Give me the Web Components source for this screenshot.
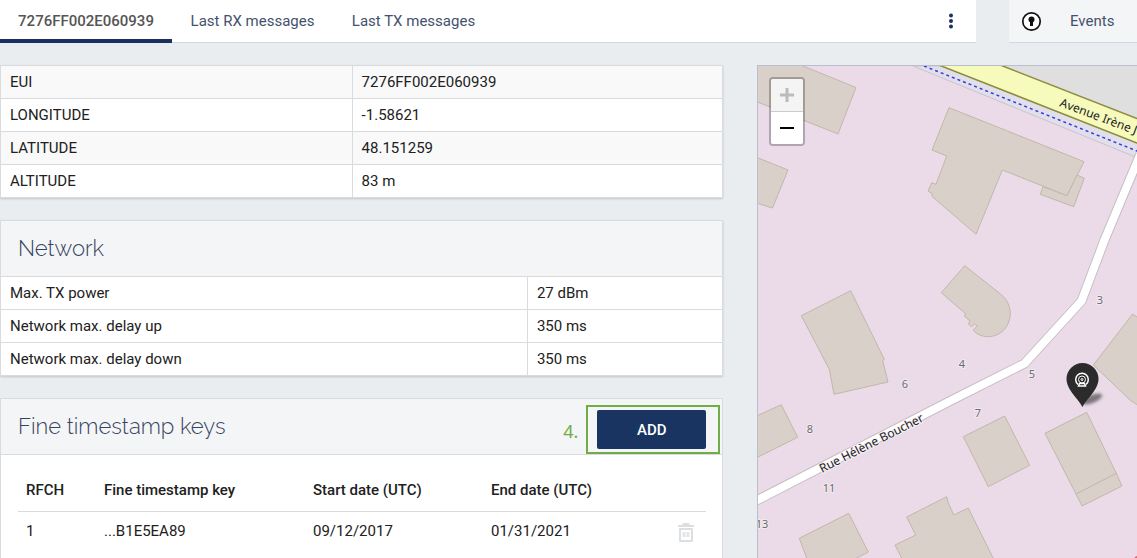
<!DOCTYPE html>
<html lang="en">
<head>
<meta charset="utf-8">
<title>Base station 7276FF002E060939</title>
<style>
  body { margin: 0; background: #e9edf0; color: #212121; font: 15px/20px Roboto, "Liberation Sans", sans-serif; }
</style>
</head>
<body>
<station-page></station-page>

<template id="tpl-page">
  <style>
    :host { display: flex; flex-direction: column; min-height: 100vh; }
    header { display: flex; gap: 33px; }
    tab-bar { flex: 1; min-width: 0; }
    main { flex: 1; display: grid; grid-template-columns: minmax(0, 40fr) minmax(0, 21fr); gap: 34px; padding-top: 22px; }
    .cards { display: flex; flex-direction: column; gap: 22px; }
    .last { flex: 1; }
  </style>
  <header>
    <tab-bar></tab-bar>
    <event-link></event-link>
  </header>
  <main>
    <div class="cards">
      <info-card striped split="35 / 72" label="Identity"></info-card>
      <info-card split="35 / 48" heading="Network" label="Network"></info-card>
      <key-card class="last"></key-card>
    </div>
    <site-map></site-map>
  </main>
</template>

<template id="tpl-tabs">
  <style>
    :host { display: flex; align-items: center; height: 42px; background: #fff; border-bottom: 1px solid #d3d8de; }
    nav { display: flex; flex: 1; align-self: stretch; }
    a { box-sizing: border-box; min-width: 161px; height: 43px; padding: 11px 16px 0; text-align: center; white-space: nowrap; color: #44526e; text-decoration: none; }
    a[aria-current] { min-width: 172px; color: #555; font-weight: 500; border-bottom: 4px solid #1a3060; }
    button { display: flex; border: 0; background: none; padding: 8px; margin-right: 9px; }
  </style>
  <nav>
    <a href="#station" aria-current="page">7276FF002E060939</a>
    <a href="#rx">Last RX messages</a>
    <a href="#tx">Last TX messages</a>
  </nav>
  <button aria-label="More actions">
    <svg width="16" height="16" fill="#1a3060"><circle cx="8" cy="2.5" r="2"/><circle cx="8" cy="8" r="2"/><circle cx="8" cy="13.5" r="2"/></svg>
  </button>
</template>

<template id="tpl-event">
  <style>
    :host { display: block; width: 128px; overflow: hidden; background: #f4f5f7; border-bottom: 1px solid #d3d8de; }
    a { display: flex; align-items: center; gap: 28px; height: 42px; padding-left: 12px; color: #44526e; text-decoration: none; }
  </style>
  <a href="#events">
    <svg width="21" height="22" viewBox="0 0 21 22"><circle cx="10.5" cy="11.5" r="8.7" fill="#fff" stroke="#111" stroke-width="1.7"/><circle cx="10.5" cy="9.6" r="3" fill="#111"/><path d="M9 10h3v6H9z" fill="#111"/></svg>
    <span>Events</span>
  </a>
</template>

<template id="tpl-info">
  <style>
    :host { display: block; background: #fff; border: 1px solid #d9dbde; box-shadow: 0 1px 2px rgba(0,0,0,.16); }
    h2 { margin: 0; padding: 0 17px; background: #f4f5f7; border-bottom: 1px solid #d9dbde; color: #36435f; font: 300 22px/55px Raleway, Lato, sans-serif; }
    table { width: 100%; border-collapse: separate; border-spacing: 0; table-layout: fixed; }
    th, td { box-sizing: border-box; height: 32px; padding: 0 9px; text-align: left; font-weight: 400; }
    td { border-left: 1px solid #d9dbde; }
    tr + tr > * { height: 33px; border-top: 1px solid #d9dbde; }
    :host([striped]) tr:nth-child(odd) { background: #f9f9f9; }
  </style>
  <h2></h2>
  <table><tbody></tbody></table>
</template>

<template id="tpl-keys">
  <style>
    :host { display: block; background: #fff; border: 1px solid #d9dbde; border-bottom: 0; }
    header { display: flex; align-items: flex-end; height: 55px; padding: 0 2px 0 17px; background: #f4f5f7; border-bottom: 1px solid #d9dbde; }
    h2 { flex: 1; margin: 0; color: #36435f; font: 300 22px/55px Raleway, Lato, sans-serif; }
    .step { margin: 0 8px 11px 0; color: #70ad47; font: 18px/24px "Noto Sans", sans-serif; }
    .mark { display: flex; padding: 3px 12px 3px 9px; border: 2px solid #70ad47; }
    .add { width: 109px; height: 39px; border: 0; border-radius: 2px; background: #1a3461; color: #fff; font: 500 15px/20px Roboto, sans-serif; }
    .body { padding: 15px 16px 0 17px; }
    table { width: 100%; border-collapse: collapse; table-layout: fixed; }
    th, td { box-sizing: border-box; height: 41px; padding: 0 8px; text-align: left; white-space: nowrap; }
    th { font-weight: 500; border-bottom: 1px solid #d9dbde; }
    td { height: 39px; }
    .ch { width: 78px; } .key { width: 209px; } .start { width: 178px; } .act { width: 37px; }
    .del { display: flex; margin-top: 4px; padding: 0; border: 0; background: none; }
  </style>
  <header>
    <h2>Fine timestamp keys</h2>
    <span class="step">4.</span>
    <div class="mark"><button class="add">ADD</button></div>
  </header>
  <div class="body">
    <table>
      <colgroup><col class="ch"><col class="key"><col class="start"><col><col class="act"></colgroup>
      <thead><tr><th>RFCH</th><th>Fine timestamp key</th><th>Start date (UTC)</th><th>End date (UTC)</th><th></th></tr></thead>
      <tbody><tr><td>1</td><td>...B1E5EA89</td><td>09/12/2017</td><td>01/31/2021</td>
        <td><button class="del" aria-label="Delete key"><svg width="18" height="20" viewBox="0 0 18 20" fill="#dcdfe2"><path d="M6 0h6l1 2h4v2H1V2h4z"/><path d="M3 6h12v12H3z" fill="none" stroke="#dcdfe2" stroke-width="2" stroke-linejoin="round"/><path d="M5.500 9h3v5h-3zM9.500 9h3v5h-3z" opacity=".8"/></svg></button></td></tr></tbody>
    </table>
  </div>
</template>

<template id="tpl-map">
  <style>
    :host { display: block; position: relative; overflow: hidden; background: #ebdbe8; border: 1px solid #b9bfcd; border-right: 0; border-bottom: 0; }
    .canvas { position: absolute; inset: 0; width: 100%; height: 100%; }
    .zoom { position: absolute; left: 11px; top: 11px; width: 32px; border: 2px solid rgba(0,0,0,.25); border-radius: 4px; background-clip: padding-box; }
    .zoom button { display: grid; place-items: center; width: 32px; height: 32px; padding: 0; border: 0; background: #fff; border-radius: 0 0 2px 2px; }
    .zoom button:first-child { height: 33px; background: #f4f4f4; border-bottom: 1px solid #ccc; border-radius: 2px 2px 0 0; }
    .b { fill: #d9d0c9; stroke: #c4b6ab; stroke-width: 1; }
    .n { font: 11px "Noto Sans", sans-serif; fill: #6b6b6b; text-anchor: middle; stroke: #f3eaf2; stroke-width: 2px; paint-order: stroke; }
    .street { font: 12px "Noto Sans", sans-serif; fill: #222; }
    .halo { stroke: #f6f0f5; stroke-width: 2px; paint-order: stroke; }
  </style>
  <svg class="canvas" role="img" aria-label="Map of the station's surroundings">
    <defs><filter id="soft" x="-50%" y="-50%" width="200%" height="200%"><feGaussianBlur stdDeviation="1.8"/></filter></defs>
    <g transform="translate(-758 -66)">
      <path fill="#e0dfdf" d="M913 66H1600V340L1133 156z"/>
      <path fill="#e1e0ea" stroke="#c9c2cc" d="M913 66l220 90 467 184v-16L941 66z"/>
      <path fill="#f6fabb" stroke="#8d8b3c" stroke-width="1.500" d="M935 63.500L1137 143l463 181v-25L1137 118.500 995 63z"/>
      <path fill="none" stroke="#3b3be0" stroke-width="1.500" stroke-dasharray="3 3" d="M924 66L1137 151l463 181"/>
      <g class="b">
        <path d="M750 45L803 66l53 21.500-18 46.500-88-35z"/>
        <path d="M750 155l7 2.500 31 12.500-15.500 38L750 201z"/>
        <path d="M949 107.700l57.700 23 77.300 31-17 34-64.700-25.700L976 234.300 931.700 196l.5-2.500-4.200-2.500 3.700-8.300 4.300 1.600 10.700-28.300L932 150z"/>
        <path d="M1077 175l7.300 3.300-10.600 28.400-33.400-12.400 2.700-7.600 24 9z"/>
        <path d="M964.700 265.700l23.600 18.600 13.400 10.700c5 4 8.800 11 8.600 20-1 13-11 21.700-22 21.700-5 0-12-2-15-6.700l4-4-2.600-2-3.400 2.700-3-2.700 1.700-3-5.700-5 1.700-2-24.700-21.300z"/>
        <path d="M850.700 290.700l33.600 68.600-1.600 1.400L888 382l-54 12.300-4.700-25-28-53.600z"/>
        <path d="M750 419l31.300-14.300 16.400 32.600L750 461z"/>
        <path d="M799.300 538.300l49.400-25 19.600 38.700L815 580z"/>
        <path d="M895 545l20.700-10-9-18 40-20.300 1.300 5.300 5.700 13 14.600-7L1010 592h-91z"/>
        <path d="M963.300 436.700L1004.700 416l25 49.300-41.400 21.400z"/>
        <path d="M1045 433.300l41.700-21 29.600 61L1122 486l-40 20-6-12z"/>
        <path fill="none" d="M1076 494l40.300-20.700"/>
        <path d="M1093.300 365l39.400-51 60 43L1160 420l-30-20z"/>
      </g>
      <g fill="none" stroke-linejoin="round">
        <path stroke="#c6bfc5" stroke-width="10" d="M1140 155l-35.500 85-23 61-57 62.500-71.500 36L740 509"/>
        <path stroke="#fff" stroke-width="8" d="M1140 155l-35.500 85-23 61-57 62.500-71.500 36L740 509"/>
      </g>
      <text class="street" transform="translate(1059 106) rotate(20.500)">Avenue Irène J</text>
      <text class="street halo" transform="translate(822 473) rotate(-27)">Rue Hélène Boucher</text>
      <g class="n">
        <text x="1100" y="304">3</text><text x="962" y="368">4</text><text x="1032" y="378">5</text><text x="905" y="388">6</text>
        <text x="978" y="417">7</text><text x="810" y="433">8</text><text x="829" y="492">11</text><text x="762" y="528">13</text>
      </g>
      <ellipse cx="1092" cy="399" rx="11" ry="4" transform="rotate(-22 1092 399)" fill="#333" opacity=".6" filter="url(#soft)"/>
      <path fill="#2b2b2b" d="M1082.500 407c-3-7-16-17-16-28a16 16 0 0 1 32 0c0 11-13 21-16 28z"/>
      <g fill="none" stroke="#fff">
        <path stroke-width="1.500" d="M1078 384.500a6.300 6.300 0 1 1 8 0"/>
        <circle cx="1082" cy="379.500" r="3.500" stroke-width="1"/>
        <circle cx="1082" cy="379.500" r="1" stroke-width="1"/>
        <path stroke-width="1.500" d="M1078.500 386l1-2.500h5l1 2.500z"/>
      </g>
      <circle cx="1138" cy="560" r="4" fill="#e06a68"/>
    </g>
  </svg>
  <div class="zoom">
    <button aria-label="Zoom in" disabled><svg width="14" height="14" stroke="#bbb" stroke-width="3"><path d="M0 7h14M7 0v14"/></svg></button>
    <button aria-label="Zoom out"><svg width="14" height="14" stroke="#000" stroke-width="2"><path d="M0 7h14"/></svg></button>
  </div>
</template>

<script>
  class TemplateElement extends HTMLElement {
    constructor() {
      super();
      this.attachShadow({ mode: "open" }).append(
        document.getElementById(this.constructor.template).content.cloneNode(true));
    }
  }
  const ROWS = {
    Identity: [["EUI", "7276FF002E060939"], ["LONGITUDE", "-1.58621"], ["LATITUDE", "48.151259"], ["ALTITUDE", "83 m"]],
    Network: [["Max. TX power", "27 dBm"], ["Network max. delay up", "350 ms"], ["Network max. delay down", "350 ms"]]
  };
  class TabBar extends TemplateElement { static template = "tpl-tabs"; }
  class EventLink extends TemplateElement { static template = "tpl-event"; }
  class KeyCard extends TemplateElement { static template = "tpl-keys"; }
  class SiteMap extends TemplateElement { static template = "tpl-map"; }
  class InfoCard extends TemplateElement {
    static template = "tpl-info";
    connectedCallback() {
      const title = this.shadowRoot.querySelector("h2");
      if (this.hasAttribute("heading")) title.textContent = this.getAttribute("heading");
      else title.remove();
      const body = this.shadowRoot.querySelector("tbody");
      body.replaceChildren();
      for (const [name, value] of ROWS[this.getAttribute("label")]) {
        const row = body.insertRow();
        const th = document.createElement("th");
        th.scope = "row";
        th.style.width = `calc(100% * ${this.getAttribute("split")})`;
        th.textContent = name;
        row.append(th);
        row.insertCell().textContent = value;
      }
    }
  }
  class StationPage extends TemplateElement { static template = "tpl-page"; }
  customElements.define("tab-bar", TabBar);
  customElements.define("event-link", EventLink);
  customElements.define("info-card", InfoCard);
  customElements.define("key-card", KeyCard);
  customElements.define("site-map", SiteMap);
  customElements.define("station-page", StationPage);
</script>
</body>
</html>
